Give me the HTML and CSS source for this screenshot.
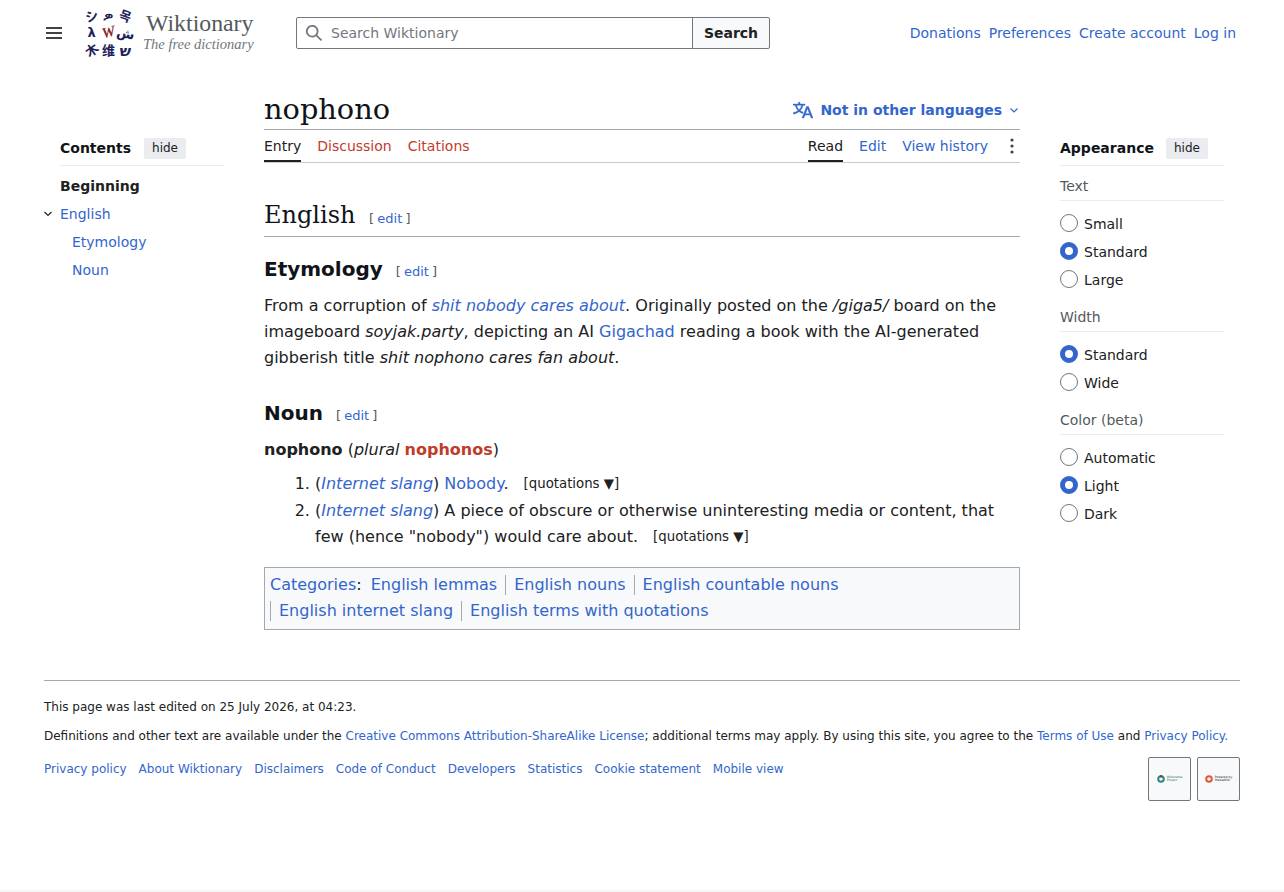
FILE: index.html
```html
<!DOCTYPE html>
<html>
<head>
    <title>nophono - Wiktionary, the free dictionary</title>
    <link rel="stylesheet" href="styles.css">
</head>
<body>
    <!-- Site header -->
    <header class="site-header">
        <div class="menu-icon">
            <svg width="20" height="20" viewBox="0 0 20 20"><path d="M2 4h16v2H2zm0 5h16v2H2zm0 5h16v2H2z" fill="#404244"/></svg>
        </div>
        <a class="logo">
            <div class="logo-mark">
                <span class="navy tilt-a">シ</span><span class="navy tilt-b">ዎ</span><span class="navy tilt-c">목</span>
                <span class="navy greek">λ</span><span class="red tilt-a">W</span><span class="navy tilt-b">ش</span>
                <span class="navy tilt-d">木</span><span class="navy">维</span><span class="navy heavy">ש</span>
            </div>
            <div class="logo-text">
                <div class="logo-name">Wiktionary</div>
                <div class="logo-tag">The free dictionary</div>
            </div>
        </a>
        <form class="search">
            <div class="search-box">
                <svg width="18" height="18" viewBox="0 0 20 20"><path d="M12.2 13.6a7 7 0 1 1 1.4-1.4l5.4 5.4-1.4 1.4zM3 8a5 5 0 1 0 10 0A5 5 0 0 0 3 8" fill="#72777d"/></svg>
                <span>Search Wiktionary</span>
            </div>
            <button type="button">Search</button>
        </form>
        <nav class="user-links">
            <a>Donations</a>
            <a>Preferences</a>
            <a>Create account</a>
            <a>Log in</a>
        </nav>
    </header>

    <div class="page">
        <!-- Table of contents -->
        <aside class="toc">
            <div class="side-head">
                <b>Contents</b>
                <span class="hide-btn">hide</span>
            </div>
            <ul class="toc-list">
                <li class="toc-begin">Beginning</li>
                <li>
                    <svg class="toc-arrow" width="10" height="10" viewBox="0 0 10 10"><path d="M1.5 3 5 6.500 8.500 3" fill="none" stroke="#202122" stroke-width="1.200"/></svg>
                    <a>English</a>
                </li>
                <li class="toc-sub"><a>Etymology</a></li>
                <li class="toc-sub"><a>Noun</a></li>
            </ul>
        </aside>

        <main class="content">
            <div class="title-row">
                <h1>nophono</h1>
                <a class="lang-btn">
                    <svg width="20" height="20" viewBox="0 0 20 20"><path d="M20 18h-1.440a.6.6 0 0 1-.4-.12.8.8 0 0 1-.23-.31L17 15h-5l-1 2.540a.8.8 0 0 1-.22.3.6.6 0 0 1-.4.14H9l4.550-11.470h1.890zm-3.530-4.310L14.890 9.500a12 12 0 0 1-.39-1.240q-.09.37-.19.69l-.19.56-1.580 4.190zm-6.300-1.580a13.400 13.400 0 0 1-2.910-1.410 11.500 11.500 0 0 0 2.810-5.370H12V4H7.310a4 4 0 0 0-.2-.56C6.870 2.790 6.600 2 6.600 2l-1.470.5s.4.890.6 1.500H0v1.330h2.150A11.200 11.200 0 0 0 5 10.700a17.200 17.200 0 0 1-5 2.100q.56.820.87 1.380a23.300 23.300 0 0 0 5.220-2.510 15.600 15.600 0 0 0 3.560 1.770zM3.630 5.330h4.910a8.100 8.100 0 0 1-2.450 4.450 9.100 9.100 0 0 1-2.460-4.450" fill="#3366cc" stroke="#3366cc" stroke-width=".4"/></svg>
                    <span>Not in other languages</span>
                    <svg class="lang-arrow" width="10" height="10" viewBox="0 0 10 10"><path d="M1.500 3.500 5 7 8.500 3.500" fill="none" stroke="#3366cc" stroke-width="1.200"/></svg>
                </a>
            </div>

            <div class="tabs">
                <div class="tab-group">
                    <a class="tab active">Entry</a>
                    <a class="tab new">Discussion</a>
                    <a class="tab new">Citations</a>
                </div>
                <div class="tab-group">
                    <a class="tab active">Read</a>
                    <a class="tab">Edit</a>
                    <a class="tab">View history</a>
                    <svg class="more" width="20" height="20" viewBox="0 0 20 20"><circle cx="10" cy="4" r="1.600" fill="#404244"/><circle cx="10" cy="10" r="1.600" fill="#404244"/><circle cx="10" cy="16" r="1.600" fill="#404244"/></svg>
                </div>
            </div>

            <h2>English <span class="edit-link">[ <a>edit</a> ]</span></h2>

            <h3>Etymology <span class="edit-link">[ <a>edit</a> ]</span></h3>
            <p>From a corruption of <a><i>shit nobody cares about</i></a>. Originally posted on the <i>/giga5/</i> board on the imageboard <i>soyjak.party</i>, depicting an AI <a>Gigachad</a> reading a book with the AI-generated gibberish title <i>shit nophono cares fan about</i>.</p>

            <h3 class="noun">Noun <span class="edit-link">[ <a>edit</a> ]</span></h3>
            <p class="headword"><b>nophono</b> (<i>plural</i> <b class="new">nophonos</b>)</p>
            <ol>
                <li>(<a><i>Internet slang</i></a>) <a>Nobody</a>. <span class="quot">[quotations ▼]</span></li>
                <li>(<a><i>Internet slang</i></a>) A piece of obscure or otherwise uninteresting media or content, that few (hence "nobody") would care about. <span class="quot">[quotations ▼]</span></li>
            </ol>

            <div class="catlinks">
                <a>Categories</a>: <span class="cat first"><a>English lemmas</a></span><span class="cat"><a>English nouns</a></span><span class="cat"><a>English countable nouns</a></span>
                <span class="cat"><a>English internet slang</a></span><span class="cat"><a>English terms with quotations</a></span>
            </div>
        </main>

        <!-- Appearance panel -->
        <aside class="appearance">
            <div class="side-head">
                <b>Appearance</b>
                <span class="hide-btn">hide</span>
            </div>
            <div class="opt-title">Text</div>
            <div class="opt"><span class="radio"></span>Small</div>
            <div class="opt"><span class="radio on"></span>Standard</div>
            <div class="opt"><span class="radio"></span>Large</div>
            <div class="opt-title">Width</div>
            <div class="opt"><span class="radio on"></span>Standard</div>
            <div class="opt"><span class="radio"></span>Wide</div>
            <div class="opt-title">Color (beta)</div>
            <div class="opt"><span class="radio"></span>Automatic</div>
            <div class="opt"><span class="radio on"></span>Light</div>
            <div class="opt"><span class="radio"></span>Dark</div>
        </aside>
    </div>

    <footer class="footer">
        <p>This page was last edited on 25 July 2026, at 04:23.</p>
        <p>Definitions and other text are available under the <a>Creative Commons Attribution-ShareAlike License</a>; additional terms may apply. By using this site, you agree to the <a>Terms of Use</a> and <a>Privacy Policy.</a></p>
        <div class="footer-row">
            <nav class="footer-links">
                <a>Privacy policy</a>
                <a>About Wiktionary</a>
                <a>Disclaimers</a>
                <a>Code of Conduct</a>
                <a>Developers</a>
                <a>Statistics</a>
                <a>Cookie statement</a>
                <a>Mobile view</a>
            </nav>
            <div class="badges">
                <div class="badge">
                    <svg width="8" height="8" viewBox="0 0 8 8"><circle cx="4" cy="4" r="2.800" fill="none" stroke="#2a8a80" stroke-width="2"/><circle cx="4" cy="1.200" r="1.200" fill="#a03030"/></svg>
                    <span class="badge-text wm">Wikimedia<br>Project</span>
                </div>
                <div class="badge">
                    <svg width="8" height="8" viewBox="0 0 8 8"><circle cx="4" cy="4" r="2.800" fill="none" stroke="#e0573a" stroke-width="2"/></svg>
                    <span class="badge-text">Powered by<br>MediaWiki</span>
                </div>
            </div>
        </div>
    </footer>
</body>
</html>
```

FILE: styles.css
```css
body {
    box-sizing: border-box;
    margin: 0;
    height: 892px;
    overflow: hidden;
    border-bottom: 2px solid #f6f6f6;
    background-color: #fff;
    color: #202122;
    font-family: "DejaVu Sans", sans-serif;
    font-size: 14px;
}

a {
    color: #3366cc;
}

.new {
    color: #bf3c2c;
}

/* Header */
.site-header {
    display: flex;
    align-items: center;
    height: 65px;
    padding: 0 48px 0 44px;
}

.menu-icon {
    display: flex;
    width: 20px;
    margin-right: 20px;
}

.logo {
    display: flex;
    align-items: center;
    width: 212px;
}

.logo-mark {
    display: grid;
    grid-template-columns: repeat(3, 17px);
    grid-auto-rows: 17px;
    width: 51px;
    margin-left: -1px;
    margin-right: 9px;
    font-family: "Noto Sans CJK SC", "DejaVu Sans", sans-serif;
    font-size: 13px;
    font-weight: bold;
    line-height: 17px;
    text-align: center;
}

.navy {
    color: #1c2158;
}

.logo-mark .red {
    color: #8a2a2a;
    font-family: "Liberation Serif", serif;
    font-size: 15px;
    font-style: italic;
}

.logo-mark span {
    display: block;
}

.logo-mark .greek {
    font-family: "DejaVu Sans", sans-serif;
}

.tilt-a {
    transform: rotate(-15deg);
}

.tilt-b {
    transform: rotate(12deg);
}

.tilt-c {
    transform: rotate(20deg);
}

.tilt-d {
    transform: rotate(-35deg);
}

.heavy {
    font-size: 15px;
}

.logo-name {
    margin-left: 3px;
    color: #54595d;
    font-family: "Liberation Serif", serif;
    font-size: 23.800px;
    line-height: 24px;
}

.logo-tag {
    color: #72777d;
    font-family: "Liberation Serif", serif;
    font-size: 14.500px;
    font-style: italic;
    line-height: 18px;
}

.logo-text {
    margin-top: -1px;
}

.search {
    display: flex;
    width: 474px;
    height: 32px;
}

.search-box {
    display: flex;
    flex: 1;
    align-items: center;
    gap: 8px;
    padding-left: 8px;
    border: 1px solid #72777d;
    border-radius: 2px 0 0 2px;
    color: #72777d;
}

.search button {
    width: 78px;
    margin-left: -1px;
    border: 1px solid #72777d;
    border-radius: 0 2px 2px 0;
    background-color: #f8f9fa;
    color: #202122;
    font-family: "DejaVu Sans", sans-serif;
    font-size: 14px;
    font-weight: bold;
}

.user-links {
    display: flex;
    gap: 8px;
    margin-left: auto;
}

/* Three columns */
.page {
    display: flex;
    align-items: flex-start;
    padding: 0 60px 0 44px;
}

.side-head {
    display: flex;
    align-items: center;
    gap: 13px;
    height: 28px;
    padding-bottom: 3px;
    border-bottom: 1px solid #eaecf0;
    color: #101418;
}

.hide-btn {
    padding: 3px 8px;
    border-radius: 2px;
    background-color: #eaecf0;
    color: #202122;
    font-size: 12px;
    line-height: 15px;
}

.appearance .hide-btn {
    margin-left: -1px;
}

.toc {
    box-sizing: border-box;
    width: 180px;
    margin-top: 69px;
    padding-left: 16px;
}

.toc-list {
    position: relative;
    margin: 6px 0 0;
    padding: 0;
    list-style: none;
}

.toc-list li {
    height: 28px;
    line-height: 28px;
}

.toc-begin {
    font-weight: bold;
}

.toc-arrow {
    position: absolute;
    left: -17px;
    top: 37px;
}

.toc-sub {
    padding-left: 12px;
}

.content {
    width: 756px;
    margin-left: 40px;
    font-size: 16px;
    line-height: 26px;
}

.title-row {
    display: flex;
    align-items: center;
    justify-content: space-between;
    box-sizing: border-box;
    height: 65px;
    padding-top: 26px;
    border-bottom: 1px solid #a2a9b1;
}

h1 {
    margin: 0 0 2px;
    color: #101418;
    font-family: "DejaVu Serif", serif;
    font-size: 28.800px;
    font-weight: normal;
    line-height: 38px;
}

.lang-btn {
    display: flex;
    align-items: center;
    gap: 7px;
    font-size: 14px;
    font-weight: bold;
}

.lang-arrow {
    margin-right: 1px;
}

.tabs {
    display: flex;
    justify-content: space-between;
    height: 32px;
    border-bottom: 1px solid #c8ccd1;
    font-size: 14px;
}

.tab-group {
    display: flex;
    gap: 16px;
}

.tab {
    height: 32px;
    line-height: 32px;
}

.tab.active {
    box-sizing: border-box;
    border-bottom: 2px solid #202122;
    color: #202122;
}

.more {
    align-self: center;
    margin-left: -2px;
    margin-right: -2px;
}

h2 {
    margin: 35px 0 0;
    padding-bottom: 4px;
    border-bottom: 1px solid #a2a9b1;
    color: #101418;
    font-family: "DejaVu Serif", serif;
    font-size: 24px;
    font-weight: normal;
    line-height: 34px;
}

h3 {
    margin: 16px 0 0;
    color: #101418;
    font-size: 20px;
    line-height: 32px;
}

h3.noun {
    margin-top: 26px;
}

.edit-link {
    margin-left: 6px;
    color: #54595d;
    font-family: "DejaVu Sans", sans-serif;
    font-size: 13px;
    font-weight: normal;
    line-height: 1;
    word-spacing: -1px;
}

p {
    margin: 8px 0 0;
    color: #202122;
}

ol {
    margin: 8px 0 0;
    padding-left: 51px;
}

ol li {
    margin-bottom: 1px;
}

.quot {
    margin-left: 10px;
    font-size: 13.300px;
    line-height: 1;
    vertical-align: 1px;
}

.catlinks {
    margin-top: 17px;
    padding: 4px 5px 5px;
    border: 1px solid #a2a9b1;
    background-color: #f8f9fa;
}

.cat {
    display: inline-block;
    padding: 0 8px;
    border-left: 1px solid #a2a9b1;
    line-height: 20px;
    white-space: nowrap;
}

.cat.first {
    padding-left: 4px;
    border-left: 0;
}

/* Appearance */
.appearance {
    width: 164px;
    margin-left: 40px;
    margin-top: 69px;
}

.opt-title {
    box-sizing: border-box;
    height: 29px;
    margin-top: 9px;
    margin-bottom: 9px;
    border-bottom: 1px solid #eaecf0;
    color: #54595d;
    line-height: 28px;
}

.side-head + .opt-title {
    margin-top: 6px;
}

.opt {
    display: flex;
    align-items: center;
    gap: 6px;
    height: 28px;
}

.radio {
    box-sizing: border-box;
    width: 18px;
    height: 18px;
    margin-bottom: 2px;
    border: 1px solid #72777d;
    border-radius: 50%;
    background-color: #fff;
}

.radio.on {
    border: 5px solid #3366cc;
}

/* Footer */
.footer {
    margin: 50px 44px 0;
    padding-top: 17px;
    border-top: 1px solid #a2a9b1;
    font-size: 12px;
    line-height: 18px;
}

.footer p {
    margin: 0 0 11px;
}

.footer-row {
    display: flex;
    justify-content: space-between;
}

.footer-links {
    display: flex;
    gap: 12px;
    margin-top: 4px;
}

.badges {
    display: flex;
    gap: 6px;
    margin-top: 1px;
}

.badge {
    display: flex;
    align-items: center;
    justify-content: center;
    gap: 2px;
    box-sizing: border-box;
    width: 43px;
    height: 44px;
    border: 1px solid #72777d;
    border-radius: 2px;
    background-color: #f8f9fa;
}

.badge-text {
    color: #202122;
    font-size: 3px;
    line-height: 3px;
}

.badge-text.wm {
    color: #2a6a60;
}
```
